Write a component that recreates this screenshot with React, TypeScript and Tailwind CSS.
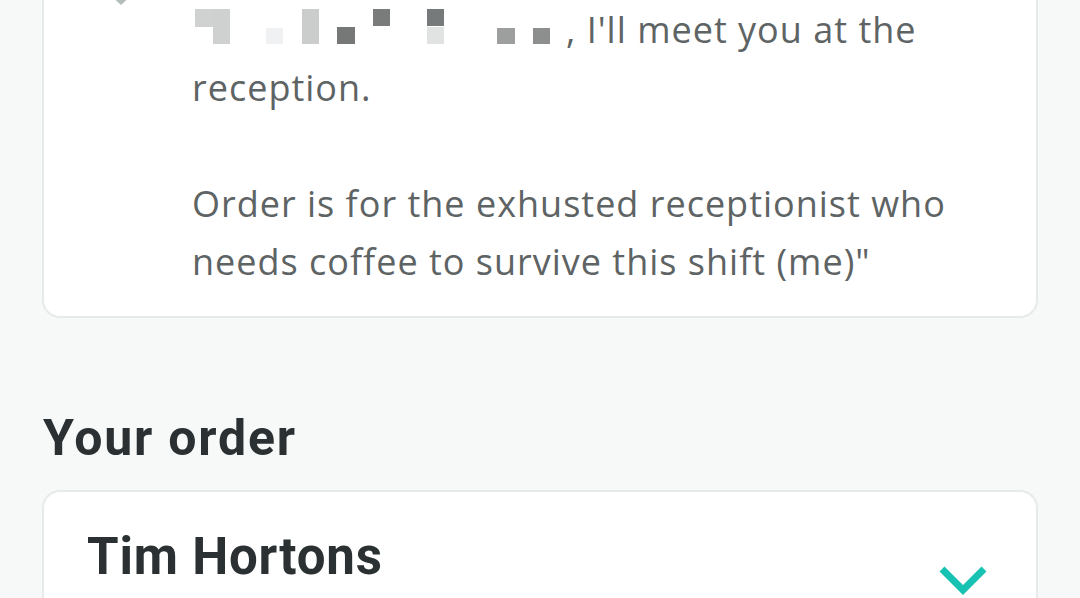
import React from 'react';

const body = { fontFamily: '"Open Sans", "Noto Sans", sans-serif' };
const head = { fontFamily: 'Roboto, "Noto Sans", sans-serif' };

// pixelated name block from the chat message
const blocks: { x: number; y: number; w: number; h: number; c: string }[] = [
  { x: 3, y: 0, w: 18, h: 18, c: '#d0d1d1' },
  { x: 21, y: 0, w: 17, h: 35, c: '#cfd0d0' },
  { x: 74, y: 19, w: 17, h: 16, c: '#f0f1f2' },
  { x: 110, y: 0, w: 17, h: 35, c: '#cbcccc' },
  { x: 145, y: 18, w: 18, h: 17, c: '#767878' },
  { x: 181, y: 0, w: 17, h: 17, c: '#7a7c7c' },
  { x: 235, y: 0, w: 17, h: 17, c: '#777a7a' },
  { x: 235, y: 18, w: 17, h: 17, c: '#e1e2e2' },
  { x: 305, y: 19, w: 18, h: 16, c: '#9d9e9e' },
  { x: 341, y: 19, w: 17, h: 16, c: '#8d8f8f' },
];

function Redacted() {
  return (
    <svg width="374" height="36" viewBox="0 0 374 36" className="inline-block align-baseline -mb-[2px]">
      {blocks.map((b, i) => (
        <rect key={i} x={b.x} y={b.y} width={b.w} height={b.h} fill={b.c} />
      ))}
    </svg>
  );
}

function MessageCard() {
  return (
    <div className="-mt-[40px] mx-[42px] flex rounded-b-[18px] border-2 border-t-0 border-[#e7eaea] bg-white pt-[41px] pb-[25px]">
      <div className="relative w-[148px] shrink-0">
        <svg width="30" height="12" viewBox="0 0 30 12" className="absolute -top-[8px] left-[62px]">
          <path d="M2 0 L15 12 L28 0 Z" fill="#b4bcbc" />
        </svg>
      </div>
      <div className="pr-[60px] text-[36px] leading-[58px] tracking-[1px] text-[#5e6364]" style={body}>
        <p>
          <Redacted />
          , I'll meet you at the reception.
        </p>
        <p className="mt-[58px]">
          Order is for the exhusted receptionist who needs coffee to survive this shift (me)"
        </p>
      </div>
    </div>
  );
}

function OrderCard() {
  return (
    <div className="mx-[42px] mt-[22px] rounded-t-[18px] border-2 border-b-0 border-[#e7eaea] bg-white h-[120px] flex items-start justify-between pl-[43px] pr-[48px] pt-[35px]">
      <h3 className="text-[51px] font-bold leading-[60px] tracking-[0.8px] text-[#2b3133]" style={head}>
        Tim Hortons
      </h3>
      <svg width="50" height="32" viewBox="0 0 50 32" className="mt-[38px]">
        <path d="M4 4 L25 25 L46 4" fill="none" stroke="#17c2b2" strokeWidth="7" />
      </svg>
    </div>
  );
}

export default function App() {
  return (
    <div className="h-[598px] w-[1080px] overflow-hidden bg-[#f7f9f9]">
      <MessageCard />
      <h2 className="mt-[90px] ml-[43px] text-[50px] font-bold leading-[60px] tracking-[1.8px] text-[#2b3133]" style={head}>
        Your order
      </h2>
      <OrderCard />
    </div>
  );
}
